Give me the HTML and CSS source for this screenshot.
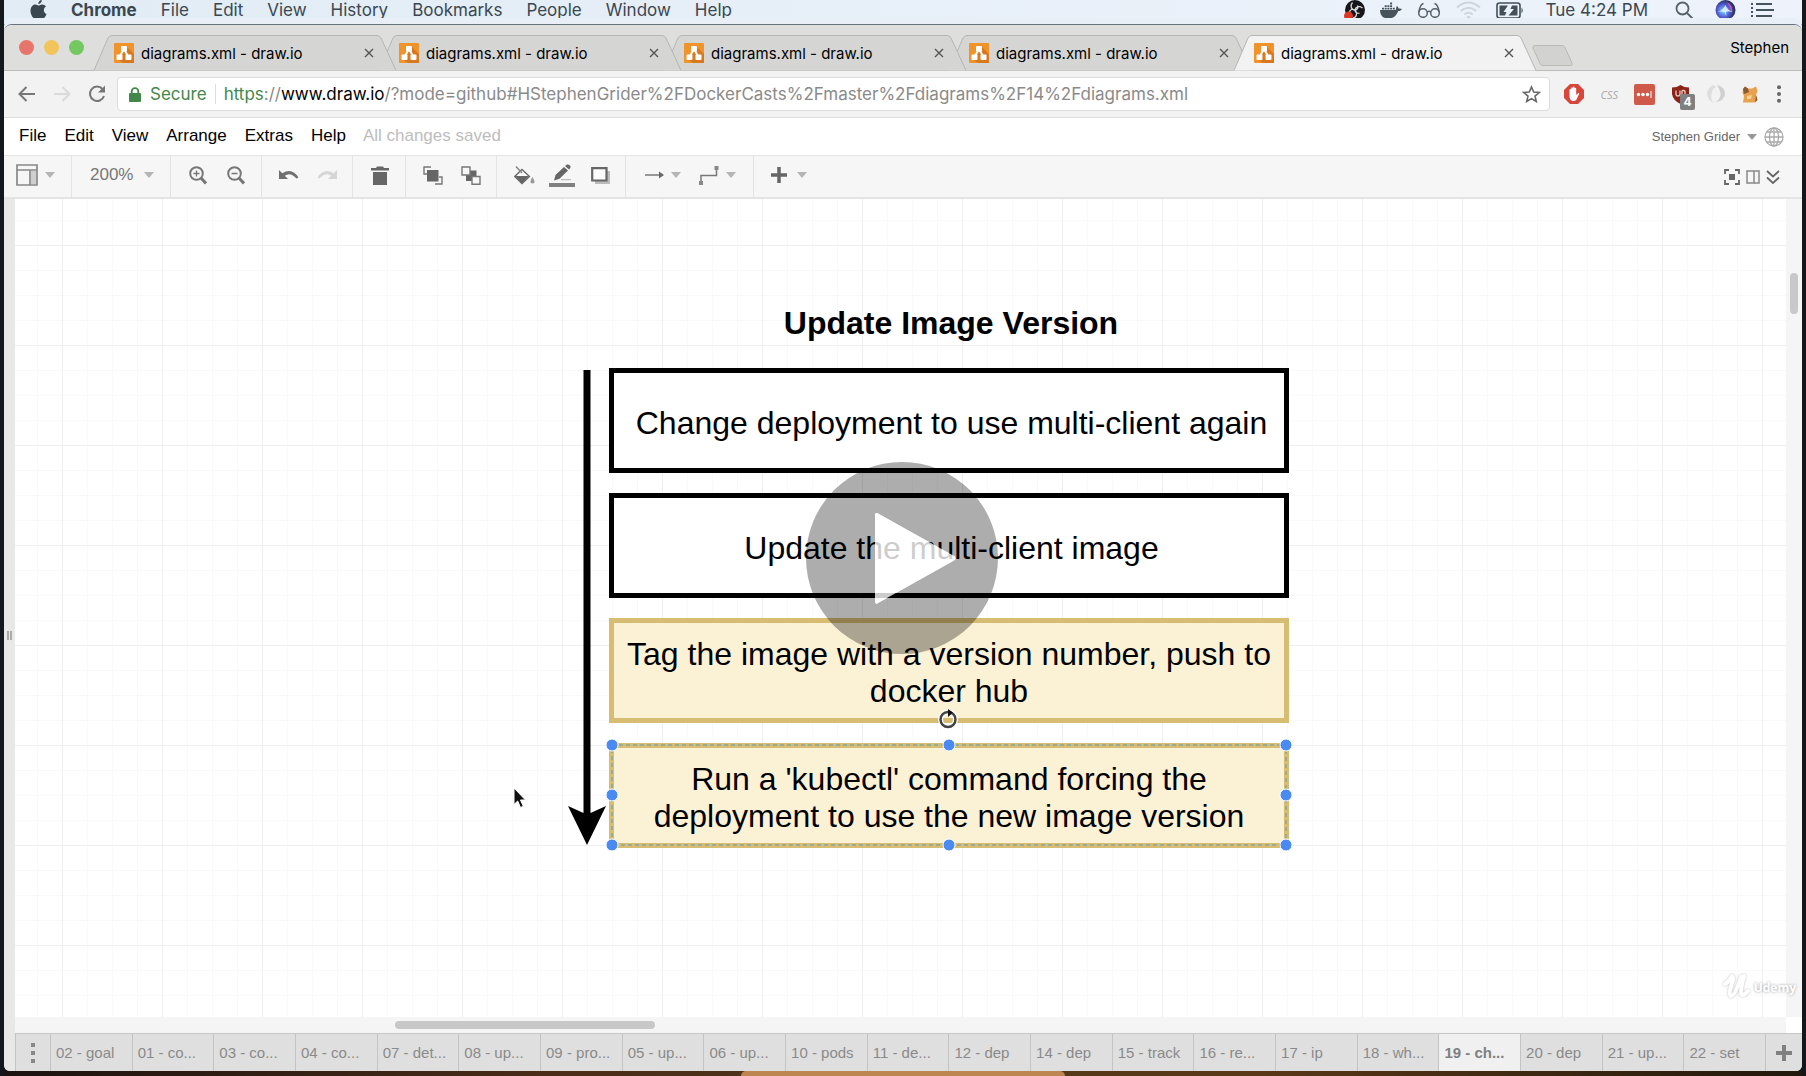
FILE: index.html
```html
<!DOCTYPE html>
<html lang="en">
<head>
<meta charset="utf-8">
<title>diagrams.xml - draw.io</title>
<link rel="stylesheet" href="styles.css">
</head>
<body>
<svg class="defs" aria-hidden="true">
  <symbol id="tab-shape" viewBox="0 0 302 36" preserveAspectRatio="none"><path d="M0 35.500 L14 3 Q15.500 0.500 18 0.500 H283 Q285.500 0.500 287 3 L302 35.500" /></symbol>
  <symbol id="favicon" viewBox="0 0 20 20"><rect width="20" height="20" rx="1" fill="#f0932b"/><path d="M12 3 L20 11 V20 H9 L3 16z" fill="#d9791e"/><path d="M10 6 L5.500 14 M10 6 L14.500 14" stroke="#fff" stroke-width="2"/><rect x="7" y="3" width="6" height="5.500" rx="1" fill="#fff"/><rect x="2.500" y="11.500" width="6" height="5.500" rx="1" fill="#fff"/><rect x="11.500" y="11.500" width="6" height="5.500" rx="1" fill="#fff"/></symbol>
  <symbol id="close" viewBox="0 0 10 10"><path d="M1 1 L9 9 M9 1 L1 9" stroke="#555" stroke-width="1.400" fill="none"/></symbol>
  <symbol id="caret" viewBox="0 0 10 6"><path d="M0 0 H10 L5 6z"/></symbol>
</svg>

<nav class="macbar" aria-label="System menu">
  <button class="apple" aria-label="Apple"><svg width="17" height="20" viewBox="0 0 17 20"><path d="M8.500 5.500C9.500 5.500 10.500 4.400 12.300 4.400C13.800 4.400 15.200 5.200 16 6.500C12.800 8.500 13.300 12.700 16.500 14C15.500 16.800 13.900 19 12.200 19C10.900 19 10.400 18.200 8.900 18.200C7.300 18.200 6.700 19 5.500 19C3.200 19 0.500 14.800 0.500 10.800C0.500 6.800 2.900 4.500 5.200 4.500C6.700 4.500 7.700 5.500 8.500 5.500zM8.300 4C8.200 1.900 9.800 0.100 11.800 0C12 2.200 10.200 4 8.300 4z" fill="#3b4750"/></svg></button>
  <button class="strong">Chrome</button><button>File</button><button>Edit</button><button>View</button><button>History</button><button>Bookmarks</button><button>People</button><button>Window</button><button>Help</button>
  <div class="status">
    <svg width="21" height="21" viewBox="0 0 21 21"><circle cx="11" cy="10" r="10" fill="#15161a"/><path d="M8.500 2.500C5.500 6 7.500 10 11 10C13.500 10 14.500 7.500 13.500 5.500M18.500 8C15 5.500 11.500 7 11 10C11 12.500 13.500 14 15.500 13M9 18C13 17.500 13.500 13 11 10C8.500 8.500 6 9.500 5.500 12" fill="none" stroke="#d8d8da" stroke-width="1.300"/><circle cx="4.500" cy="16" r="4.500" fill="#dd3526"/></svg>
    <svg width="22" height="18" viewBox="0 0 22 18"><path d="M0 9H15.500C16.500 8 16 6.500 16.800 5C18 5.700 18.500 6.500 18.500 7.500C20 7.200 21 7.500 22 8C21 9.800 19.500 10 18.200 10C16.500 15 13 17.500 8.500 17.500C3.500 17.500 0 15 0 9z" fill="#47535c"/><path d="M2 6.700h2v1.800h-2zM4.700 6.700h2v1.800h-2zM7.400 6.700h2v1.800h-2zM10.100 6.700h2v1.800h-2zM12.800 6.700h2v1.800h-2zM4.700 4.200h2V6h-2zM7.400 4.200h2V6h-2zM10.100 4.200h2V6h-2zM10.100 1.500h2v1.900h-2z" fill="#47535c"/></svg>
    <svg width="24" height="16" viewBox="0 0 24 16"><g fill="none" stroke="#56616a" stroke-width="1.500"><circle cx="6" cy="11" r="4.300"/><circle cx="18" cy="11" r="4.300"/><path d="M10.300 10Q12 8.700 13.700 10M1.800 10C2.500 6 4 2 6.500 1.500M22.200 10C21.500 6 20 2 17.500 1.500"/></g></svg>
    <svg width="25" height="19" viewBox="0 0 25 19"><g fill="none" stroke="#cfd5da" stroke-width="2"><path d="M1 6.500Q12.500-3.500 24 6.500M4.700 10Q12.500 3.500 20.300 10M8.300 13.500Q12.500 10 16.700 13.500"/></g><circle cx="12.500" cy="16.500" r="1.800" fill="#cfd5da"/></svg>
    <svg width="28" height="17" viewBox="0 0 28 17"><rect x="1" y="1" width="23" height="15" rx="2.500" fill="none" stroke="#454f57" stroke-width="1.600"/><path d="M3.500 3.500H12L7.500 10H10.500L9 13.500H3.500zM16 3.500H21.500V13.500H12.500L18 7H14.500z" fill="#454f57"/><path d="M25.500 5.500Q28 8.500 25.500 11.500z" fill="#454f57"/></svg>
    <time>Tue 4:24 PM</time>
    <svg class="search" width="19" height="19" viewBox="0 0 19 19"><g fill="none" stroke="#56616a" stroke-width="1.800"><circle cx="7.500" cy="7.500" r="6"/><path d="M12 12L18 18"/></g></svg>
    <svg width="21" height="20" viewBox="0 0 21 20"><defs><radialGradient id="siri" cx=".4" cy=".55" r=".6"><stop offset="0" stop-color="#7fe0ff"/><stop offset=".5" stop-color="#5560d8"/><stop offset="1" stop-color="#23264f"/></radialGradient></defs><circle cx="10.500" cy="10" r="10" fill="url(#siri)"/><path d="M12 2Q19 6 16.500 13Q15 7 12 2z" fill="#c752b8"/><path d="M3 12Q8 10 10.500 5Q12 10 18 12Q13 11 11 12L11.500 17L9.500 12Q6 11 3 12z" fill="#e8fbff" opacity=".8"/></svg>
    <svg width="23" height="15" viewBox="0 0 23 15"><g fill="#47535c"><path d="M0 0h2v2H0zM0 4h2v2H0zM0 8h2v2H0zM0 12h2v2H0zM5 0h16v2H5zM5 6h18v2H5zM5 12h16v2H5z"/></g></svg>
  </div>
</nav>

<div class="window">
  <header class="tabstrip">
    <div class="lights"><button class="red" aria-label="Close"></button><button class="yellow" aria-label="Minimise"></button><button class="green" aria-label="Zoom"></button></div>
    <div class="tabs">
      <div class="tab"><svg class="shape"><use href="#tab-shape"/></svg><svg class="fav"><use href="#favicon"/></svg><a href="#">diagrams.xml - draw.io</a><button aria-label="Close tab"><svg><use href="#close"/></svg></button></div>
      <div class="tab"><svg class="shape"><use href="#tab-shape"/></svg><svg class="fav"><use href="#favicon"/></svg><a href="#">diagrams.xml - draw.io</a><button aria-label="Close tab"><svg><use href="#close"/></svg></button></div>
      <div class="tab"><svg class="shape"><use href="#tab-shape"/></svg><svg class="fav"><use href="#favicon"/></svg><a href="#">diagrams.xml - draw.io</a><button aria-label="Close tab"><svg><use href="#close"/></svg></button></div>
      <div class="tab"><svg class="shape"><use href="#tab-shape"/></svg><svg class="fav"><use href="#favicon"/></svg><a href="#">diagrams.xml - draw.io</a><button aria-label="Close tab"><svg><use href="#close"/></svg></button></div>
      <div class="tab active"><svg class="shape"><use href="#tab-shape"/></svg><svg class="fav"><use href="#favicon"/></svg><a href="#">diagrams.xml - draw.io</a><button aria-label="Close tab"><svg><use href="#close"/></svg></button></div>
      <button class="newtab" aria-label="New tab"><svg width="41" height="21" viewBox="0 0 41 21"><path d="M3 .5H30Q32 .5 33 2.500L40 18Q41 20.500 38.500 20.500H11Q9 20.500 8 18.500L1 3Q0 .5 3 .5z" fill="#d2d2d1" stroke="#b9b9b8"/></svg></button>
    </div>
    <button class="profile">Stephen</button>
  </header>

  <div class="navbar">
    <div class="navbuttons">
      <button aria-label="Back"><svg width="18" height="16" viewBox="0 0 18 16"><path d="M17 8H2M8.500 1L1.500 8L8.500 15" fill="none" stroke="#777" stroke-width="2"/></svg></button>
      <button aria-label="Forward"><svg width="18" height="16" viewBox="0 0 18 16"><path d="M1 8H16M9.500 1L16.500 8L9.500 15" fill="none" stroke="#dadada" stroke-width="2"/></svg></button>
      <button aria-label="Reload"><svg width="18" height="18" viewBox="0 0 18 18"><path d="M14.500 4A7.200 7.200 0 1 0 16 11" fill="none" stroke="#777" stroke-width="2"/><path d="M17 0.500V7.500H10z" fill="#777"/></svg></button>
    </div>
    <div class="omnibox">
      <svg width="12" height="15" viewBox="0 0 12 15"><rect x="0" y="6" width="12" height="9" rx="1" fill="#43884a"/><path d="M2.700 7V4.500a3.300 3.300 0 0 1 6.600 0V7" fill="none" stroke="#43884a" stroke-width="1.800"/></svg>
      <span class="secure">Secure</span>
      <div class="url" role="textbox" aria-label="Address" contenteditable="true" spellcheck="false"><span class="scheme">https</span>://<span class="host">www.draw.io</span>/?mode=github#HStephenGrider%2FDockerCasts%2Fmaster%2Fdiagrams%2F14%2Fdiagrams.xml</div>
      <button aria-label="Bookmark"><svg width="19" height="18" viewBox="0 0 19 18"><path d="M9.500 2L11.700 7L17.200 7.500L13 11.100L14.300 16.500L9.500 13.600L4.700 16.500L6 11.100L1.800 7.500L7.300 7z" fill="none" stroke="#666" stroke-width="1.600"/></svg></button>
    </div>
    <div class="extensions">
      <button aria-label="Ad blocker"><svg width="20" height="20" viewBox="0 0 20 20"><path d="M6 0H14L20 6V14L14 20H6L0 14V6z" fill="#d6463a"/><path d="M5.500 9.500V5.500Q6.300 4.500 7 5.500V9V4Q7.800 2.800 8.700 4V8.500V3.200Q9.600 2 10.500 3.200V8.500V4.300Q11.400 3.200 12.200 4.300V11L14 9.200Q15.200 8.700 15.200 9.800L12.500 15.500Q11 17.500 8.500 17Q5.500 16 5.500 12z" fill="#fff"/></svg></button>
      <button class="css" aria-label="CSS">CSS</button>
      <button aria-label="Passwords"><svg width="21" height="21" viewBox="0 0 21 21"><rect width="21" height="21" rx="2" fill="#d05a4a"/><circle cx="4.500" cy="10.500" r="1.700" fill="#fff"/><circle cx="9" cy="10.500" r="1.700" fill="#fff"/><circle cx="13.500" cy="10.500" r="1.700" fill="#fff"/><path d="M17 7V14" stroke="#fff" stroke-width="1"/></svg></button>
      <button class="ublock" aria-label="Blocker, 4"><svg width="19" height="19" viewBox="0 0 19 19"><path d="M9.500 0Q13 2.500 18 2.500V9Q17 15.500 9.500 19Q2 15.500 1 9V2.500Q6 2.500 9.500 0z" fill="#8c2318"/><path d="M5 5.500V9Q5 11 7 11Q9 11 9 9V5.500M11 5.500V11H13Q14.500 10.500 14 8.500Q14.500 6 13 5.500H11" fill="none" stroke="#e3bcb6" stroke-width="1.400"/></svg><span>4</span></button>
      <button aria-label="Extension"><svg width="20" height="20" viewBox="0 0 20 20"><path d="M7 1Q1 4 1 10.500Q2 17 8 19Q4 15 5.500 10Q6 5 10 3z" fill="#dedede"/><path d="M11 1Q19 3 19 10Q18 17 10 18Q15 14 14.500 9.500Q14 5 11 1z" fill="#d0d0d0"/></svg></button>
      <button aria-label="Extension"><svg width="16" height="17" viewBox="0 0 16 17"><path d="M1 3L3 0.500L6 2.500H10L14 0.500L15.500 5L14 9L15 12L13 16.500H1L2 10L0.500 7z" fill="#e8a14d"/><path d="M1 3L3 .5L6 2.500L7 6L2 8zM14 9L15.500 14L13 16.500z" fill="#8a5a34"/><path d="M5 10L10 9L9 13L5 13z" fill="#f6d09a"/></svg></button>
      <button class="more" aria-label="Menu"><svg width="4" height="18" viewBox="0 0 4 18"><g fill="#666"><circle cx="2" cy="2.200" r="2"/><circle cx="2" cy="9" r="2"/><circle cx="2" cy="15.800" r="2"/></g></svg></button>
    </div>
  </div>

  <div class="menubar">
    <button>File</button><button>Edit</button><button>View</button><button>Arrange</button><button>Extras</button><button>Help</button>
    <span class="saved">All changes saved</span>
    <button class="user">Stephen Grider <svg class="caret"><use href="#caret"/></svg></button>
    <button class="globe" aria-label="Language"><svg width="20" height="20" viewBox="0 0 20 20"><g fill="none" stroke="#ababab" stroke-width="1.300"><circle cx="10" cy="10" r="9"/><ellipse cx="10" cy="10" rx="4.500" ry="9"/><path d="M10 1V19M1 10H19M2.800 5H17.200M2.800 15H17.200"/></g></svg></button>
  </div>

  <div class="toolbar">
    <div class="group view"><button aria-label="View"><svg width="22" height="22" viewBox="0 0 22 22"><path d="M1 1H21V21H1zM1 6H21M14 6V21" fill="none" stroke="#888" stroke-width="1.700"/><path d="M15 7H20V20H15z" fill="#cfcfcf"/></svg><svg class="caret"><use href="#caret"/></svg></button></div>
    <div class="group percent"><button>200%<svg class="caret"><use href="#caret"/></svg></button></div>
    <div class="group">
      <button aria-label="Zoom in"><svg width="18" height="19" viewBox="0 0 18 19"><g fill="none" stroke="#777"><circle cx="7.500" cy="7.500" r="6.300" stroke-width="2"/><path d="M12 12L17 17.500" stroke-width="3"/><path d="M4.500 7.500H10.500M7.500 4.500V10.500" stroke-width="1.300"/></g></svg></button>
      <button aria-label="Zoom out"><svg width="18" height="19" viewBox="0 0 18 19"><g fill="none" stroke="#777"><circle cx="7.500" cy="7.500" r="6.300" stroke-width="2"/><path d="M12 12L17 17.500" stroke-width="3"/><path d="M4.500 7.500H10.500" stroke-width="1.300"/></g></svg></button>
    </div>
    <div class="group">
      <button aria-label="Undo"><svg width="20" height="12" viewBox="0 0 20 12"><path d="M0 1V10H9L5.800 6.800Q11 2.500 17.500 9.500L19.500 8.500Q13-2 3.300 4.300z" fill="#6f6f6f"/></svg></button>
      <button aria-label="Redo"><svg width="20" height="12" viewBox="0 0 20 12"><path d="M20 1V10H11L14.200 6.800Q9 2.500 2.500 9.500L.5 8.500Q7-2 16.700 4.300z" fill="#d6d6d6"/></svg></button>
    </div>
    <div class="group"><button aria-label="Delete"><svg width="18" height="19" viewBox="0 0 18 19"><path d="M0 2H5L6 0.500H12L13 2H18V4.500H0zM2 6H16V19H2z" fill="#666"/></svg></button></div>
    <div class="group">
      <button aria-label="To front"><svg width="20" height="19" viewBox="0 0 20 19"><path d="M8 1H1V8H4M12 18H19V11H16" fill="none" stroke="#777" stroke-width="1.400"/><path d="M4 4H15.500V15.500H4z" fill="#666"/></svg></button>
      <button aria-label="To back"><svg width="20" height="19" viewBox="0 0 20 19"><path d="M5 4.500H15.500V15H5z" fill="#666"/><g fill="#f7f7f7" stroke="#777" stroke-width="1.400"><path d="M1 1H9V9H1zM11 10.500H19V18.300H11z"/></g></svg></button>
    </div>
    <div class="group">
      <button aria-label="Fill"><svg width="21" height="19" viewBox="0 0 21 19"><path d="M8 3.500L15.500 10.500L8 17.500L0.800 10.500z" fill="#fafafa" stroke="#666" stroke-width="1.300"/><path d="M1 10H15L8 17.500z" fill="#666"/><path d="M2 .5L8 7" stroke="#888" stroke-width="1.500"/><path d="M18.300 11Q21 15 20.500 16.500Q18.500 18.500 16.500 16.500Q16 15 18.300 11z" fill="#999"/></svg></button>
      <button aria-label="Line colour"><svg width="26" height="23" viewBox="0 0 26 23"><path d="M0 19H26V23H0z" fill="#808080"/><path d="M5 16.500L6.500 11L15 3L19 6.500L10.500 14.800zM16 2L18 .5Q20 0 21.500 2Q22 3.500 20 5.500z" fill="#666"/><path d="M12 15.700H22" stroke="#bbb" stroke-width="1.200"/></svg></button>
      <button aria-label="Shadow"><svg width="19" height="17" viewBox="0 0 19 17"><path d="M4 4H19V17H4z" fill="#bbb"/><path d="M1.200 1.200H15.500V13.500H1.200z" fill="#fbfbfb" stroke="#666" stroke-width="2.200"/></svg></button>
    </div>
    <div class="group lines">
      <button aria-label="Arrow style"><svg width="19" height="8" viewBox="0 0 19 8"><path d="M0 4H15" stroke="#777" stroke-width="1.500"/><path d="M14 .5L19 4L14 7.500z" fill="#666"/></svg><svg class="caret"><use href="#caret"/></svg></button>
      <button aria-label="Connector style"><svg width="20" height="19" viewBox="0 0 20 19"><path d="M2 16V9.500H17.500V3" fill="none" stroke="#777" stroke-width="1.500"/><path d="M0 15H4V19H0zM15.500 0H19.500V4H15.500z" fill="#888"/></svg><svg class="caret"><use href="#caret"/></svg></button>
    </div>
    <div class="group insert"><button aria-label="Insert"><svg width="16" height="16" viewBox="0 0 16 16"><path d="M8 0V16M0 8H16" stroke="#666" stroke-width="3.500"/></svg><svg class="caret"><use href="#caret"/></svg></button></div>
    <div class="tools-right">
      <button aria-label="Fullscreen"><svg width="16" height="16" viewBox="0 0 16 16"><path d="M1 5V1H5M11 1H15V5M15 11V15H11M5 15H1V11" fill="none" stroke="#666" stroke-width="1.800"/><path d="M5 5H11V11H5z" fill="#666"/></svg></button>
      <button aria-label="Format panel"><svg width="14" height="14" viewBox="0 0 14 14"><path d="M1 1H13V13H1zM8 1V13" fill="none" stroke="#888" stroke-width="1.500"/></svg></button>
      <button aria-label="Collapse"><svg width="14" height="14" viewBox="0 0 14 14"><path d="M1 1L7 6.500L13 1M1 7.500L7 13L13 7.500" fill="none" stroke="#666" stroke-width="1.800"/></svg></button>
    </div>
  </div>

  <div class="workspace">
    <div class="splitter"><i></i></div>
    <div class="editor">
      <main class="canvas">
        <div class="diagram">
          <h1>Update Image Version</h1>
          <div class="step single">Change deployment to use multi-client again</div>
          <div class="step single">Update the multi-client image</div>
          <div class="step gold">Tag the image with a version number, push to docker hub</div>
          <div class="step gold">Run a 'kubectl' command forcing the deployment to use the new image version</div>
        </div>
        <svg class="flow" width="40" height="478" viewBox="0 0 40 478"><path d="M16.500 0H23.500V443L39 436L20 475L1 436L16.500 443z"/></svg>
        <svg class="selection" width="690" height="144" viewBox="0 0 690 144">
          <path d="M8 36H682V136H8z" fill="none" stroke="#86a8a0" stroke-width="1.500" stroke-dasharray="4 3"/>
          <g fill="#4a8af4" stroke="#fff" stroke-width="1"><circle cx="8" cy="36" r="6"/><circle cx="345" cy="36" r="6"/><circle cx="682" cy="36" r="6"/><circle cx="8" cy="86" r="6"/><circle cx="682" cy="86" r="6"/><circle cx="8" cy="136" r="6"/><circle cx="345" cy="136" r="6"/><circle cx="682" cy="136" r="6"/></g>
          <circle cx="344" cy="10.500" r="7.500" fill="none" stroke="#fff" stroke-width="5"/>
          <circle cx="344" cy="10.500" r="7.500" fill="none" stroke="#444" stroke-width="2.500"/><path d="M344 0L349 3.500L344 8z" fill="#111"/>
        </svg>
        <svg class="cursor" width="14" height="22" viewBox="0 0 14 22"><path d="M1 1V17.500L4.700 14L7.500 20.500L10.300 19.300L7.500 13H12.500z" fill="#111" stroke="#fff" stroke-width="1"/></svg>
        <button class="play" aria-label="Play"><svg width="192" height="192" viewBox="0 0 192 192"><path d="M96 0A96 96 0 1 0 96 192A96 96 0 1 0 96 0zM69 53Q69 50 72 51.500L148 94Q151 96 148 98.500L72 141Q69 143 69 139z" fill="#000" fill-rule="evenodd" opacity=".32"/><path d="M69 53Q69 50 72 51.500L148 94Q151 96 148 98.500L72 141Q69 143 69 139z" fill="#fff" opacity=".8"/></svg></button>
      </main>
      <div class="vscroll"><i></i></div>
      <div class="hscroll"><i></i></div>
      <div class="corner"></div>
      <div class="watermark"><svg width="28" height="26" viewBox="0 0 28 26"><path d="M2 10Q6 8 9 2Q11 3 9 9Q5 20 8 22Q12 22 18 3L21 2Q16 20 19 21Q22 21 25 17" fill="none" stroke="#fff" stroke-width="4" stroke-linecap="round" stroke-linejoin="round"/></svg><span>Udemy</span></div>
      <nav class="pages" aria-label="Pages">
        <button class="pagemenu" aria-label="Pages"><svg width="4" height="20" viewBox="0 0 4 20"><path d="M0 0h4v4H0zM0 8h4v4H0zM0 16h4v4H0z" fill="#888"/></svg></button>
        <a href="#">02 - goal</a><a href="#">01 - co...</a><a href="#">03 - co...</a><a href="#">04 - co...</a><a href="#">07 - det...</a><a href="#">08 - up...</a><a href="#">09 - pro...</a><a href="#">05 - up...</a><a href="#">06 - up...</a><a href="#">10 - pods</a><a href="#">11 - de...</a><a href="#">12 - dep</a><a href="#">14 - dep</a><a href="#">15 - track</a><a href="#">16 - re...</a><a href="#">17 - ip</a><a href="#">18 - wh...</a><a href="#" class="current">19 - ch...</a><a href="#">20 - dep</a><a href="#">21 - up...</a><a href="#">22 - set</a>
        <button class="addpage" aria-label="Add page"><svg width="16" height="16" viewBox="0 0 16 16"><path d="M8 0V16M0 8H16" stroke="#808080" stroke-width="4"/></svg></button>
      </nav>
    </div>
  </div>
</div>
<div class="desktop"><i></i></div>
</body>
</html>
```
FILE: styles.css
```css
* { box-sizing: border-box; }
body {
  margin: 0;
  padding: 0 4px;
  min-height: 100vh;
  display: flex;
  flex-direction: column;
  background: #14181d;
  font-family: "Liberation Sans", Arial, sans-serif;
  color: #000;
  overflow: hidden;
}
button {
  border: 0;
  padding: 0;
  margin: 0;
  background: none;
  font: inherit;
  color: inherit;
  display: flex;
  align-items: center;
  justify-content: center;
  flex: none;
  white-space: nowrap;
}
a { color: inherit; text-decoration: none; }
svg { display: block; flex: none; }
.defs { position: absolute; width: 0; height: 0; }
.caret { width: 10px; height: 6px; fill: #b5b5b5; }

/* system menu bar */
.macbar {
  height: 24px;
  padding: 0 28px 4px 26px;
  display: flex;
  align-items: center;
  gap: 24px;
  background: linear-gradient(90deg, #e1ecf5, #eef3fb);
  font: 17px Inter, sans-serif;
  color: #3b4750;
}
.macbar .strong { font-weight: 700; }
.status { margin-left: auto; display: flex; align-items: center; gap: 15px; }
.status time { margin: 0 12px 0 7px; }
.status .search { margin-right: 6px; }

/* browser chrome */
.window {
  flex: 1;
  display: flex;
  flex-direction: column;
  border-top: 1px solid #68727c;
  border-radius: 8px 8px 6px 6px;
  background: #f2f2f2;
  overflow: hidden;
  box-shadow: 0 -6px 0 #e8eff6;
}
.tabstrip {
  height: 46px;
  display: flex;
  align-items: flex-end;
  background: #dededd;
  border-bottom: 1px solid #bcbcbc;
  font: 15px Inter, sans-serif;
}
.lights { display: flex; gap: 10px; padding: 0 10px 15px 15px; flex: none; }
.lights button { width: 15px; height: 15px; border-radius: 50%; }
.red { background: #e8756b; }
.yellow { background: #f2c45c; }
.green { background: #74c862; }
.tabs { display: flex; flex: 1; min-width: 0; align-items: flex-end; margin-bottom: -1px; }
.tab {
  position: relative;
  isolation: isolate;
  flex: 0 1 302px;
  min-width: 0;
  height: 36px;
  margin-right: -17px;
  padding: 0 22px 0 20px;
  display: flex;
  align-items: center;
  gap: 7px;
}
.tab:nth-child(1) { z-index: 4; }
.tab:nth-child(2) { z-index: 3; }
.tab:nth-child(3) { z-index: 2; }
.tab:nth-child(4) { z-index: 1; }
.tab.active { z-index: 5; }
.shape { position: absolute; inset: 0; width: 100%; height: 100%; z-index: -1; fill: #d5d5d4; stroke: #b5b5b5; }
.active .shape { fill: #f2f2f2; }
.fav { width: 20px; height: 20px; }
.tab a { flex: 1; overflow: hidden; white-space: nowrap; }
.tab button svg { width: 10px; height: 10px; }
.newtab { margin: 0 0 5px 13px; }
.profile { padding: 0 13px 13px 0; }

.navbar {
  height: 47px;
  padding: 0 21px 0 14px;
  display: flex;
  align-items: center;
  gap: 14px;
  border-bottom: 1px solid #ddd;
}
.navbuttons { display: flex; align-items: center; gap: 17px; margin-right: -3px; }
.omnibox {
  flex: 1;
  min-width: 0;
  height: 34px;
  padding: 0 8px 0 11px;
  display: flex;
  align-items: center;
  border: 1px solid #dcdcdc;
  border-radius: 4px;
  background: #fff;
  font: 17px Inter, sans-serif;
  color: #8a8a8a;
}
.secure { color: #43884a; padding: 0 8px 0 9px; margin-right: 8px; border-right: 1px solid #ddd; }
.url { flex: 1; min-width: 0; overflow: hidden; white-space: nowrap; outline: 0; }
.scheme { color: #43884a; }
.host { color: #000; }
.extensions { display: flex; align-items: center; gap: 16px; }
.css { font: italic 11px "Open Sans", sans-serif; color: #a8a8a8; }
.ublock { position: relative; }
.ublock span {
  position: absolute;
  left: 9px;
  top: 9px;
  width: 15px;
  height: 16px;
  border-radius: 2px;
  background: #808080;
  color: #fff;
  font: bold 12px/16px Inter, sans-serif;
}
.more { margin-left: 3px; }

/* editor menu */
.menubar {
  height: 38px;
  padding: 0 18px 2px 15px;
  display: flex;
  align-items: center;
  gap: 18px;
  background: #fff;
  border-bottom: 1px solid #e4e4e4;
  font-size: 17px;
}
.saved { color: #bdbdbd; margin-left: -1px; }
.user { margin-left: auto; padding-top: 2px; gap: 7px; font-size: 13px; color: #666; }
.user .caret { fill: #999; }
.globe { margin-left: -11px; padding-top: 2px; }

.toolbar {
  height: 43px;
  display: flex;
  background: #f6f6f6;
  border-bottom: 2px solid #e4e4e4;
  font-size: 17px;
  color: #777;
}
.group { display: flex; padding: 0 6px 3px 8px; border-right: 1px solid #e4e4e4; }
.group button { width: 38px; }
.view button { width: auto; gap: 7px; }
.view { padding-left: 12px; padding-right: 16px; }
.percent button { width: auto; gap: 11px; }
.percent { padding-left: 18px; padding-right: 16px; }
.lines { gap: 18px; padding-left: 19px; padding-right: 17px; }
.lines button { width: auto; gap: 7px; }
.insert { border: 0; padding-left: 17px; }
.insert button { width: auto; gap: 10px; }
.tools-right { margin-left: auto; padding-right: 22px; display: flex; gap: 6px; }

/* drawing area */
.workspace { flex: 1; display: flex; min-height: 0; }
.splitter { width: 11px; background: #e8e8e8; display: flex; align-items: center; justify-content: center; }
.splitter i { width: 5px; height: 9px; border: solid #aaa; border-width: 0 2px; }
.editor {
  position: relative;
  flex: 1;
  min-width: 0;
  display: grid;
  grid-template: minmax(0, 1fr) 16px 38px / minmax(0, 1fr) 16px;
}
.canvas {
  position: relative;
  overflow: hidden;
  background-color: #fff;
  background-image:
    linear-gradient(90deg, #efefef 1px, transparent 1px),
    linear-gradient(#efefef 1px, transparent 1px),
    linear-gradient(90deg, #f9f9f9 1px, transparent 1px),
    linear-gradient(#f9f9f9 1px, transparent 1px);
  background-size: 100px 100px, 100px 100px, 25px 25px, 25px 25px;
  background-position: 47px 46px;
}
.diagram {
  position: absolute;
  left: 594px;
  top: 106px;
  width: 680px;
  display: flex;
  flex-direction: column;
  gap: 20px;
  font-size: 32px;
  line-height: 37px;
  text-align: center;
}
.diagram h1 { margin: 0 0 6px; padding-left: 4px; font-size: 32px; line-height: 37px; }
.step {
  height: 105px;
  padding-top: 5px;
  border: 5px solid #000;
  background: #fff;
  display: flex;
  align-items: center;
  justify-content: center;
}
.single { padding-left: 5px; }
.gold { border-color: #d6bd72; background: #fbf2d6; }
.flow { position: absolute; left: 552px; top: 171px; }
.selection { position: absolute; left: 589px; top: 510px; }
.cursor { position: absolute; left: 498px; top: 588px; }
.play { position: absolute; left: 50%; top: 263px; margin-left: -95px; }
.vscroll, .hscroll { background: #f5f5f5; }
.vscroll { padding: 74px 0 0 4px; }
.vscroll i { display: block; width: 8px; height: 41px; border-radius: 4px; background: #c8c8c8; }
.hscroll { padding: 4px 0 0 380px; }
.hscroll i { display: block; width: 260px; height: 8px; border-radius: 4px; background: #c8c8c8; }
.corner { background: #fff; }
.watermark {
  position: absolute;
  right: 6px;
  bottom: 71px;
  display: flex;
  align-items: center;
  gap: 3px;
  font: bold 12px "Open Sans", sans-serif;
  color: #fff;
  text-shadow: 0 0 3px #999;
}
.watermark svg { filter: drop-shadow(0 0 1px #bbb); }
.pages {
  grid-column: 1 / -1;
  display: flex;
  background: #dfdfdf;
  border-top: 1px solid #c6c6c6;
  font-size: 15px;
  color: #8a8a8a;
}
.pages > * { border-left: 1px solid #c4c4c4; }
.pages a { flex: 1; min-width: 0; padding-left: 5px; line-height: 38px; white-space: nowrap; overflow: hidden; }
.pages .current { background: #f0f0f0; font-weight: bold; color: #808080; }
.pages .pagemenu { width: 35px; }
.pages .addpage { width: 37px; }

/* strip of desktop below the window */
.desktop {
  height: 5px;
  background: linear-gradient(90deg, #1c1210, #4a2c18 30%, #54391a 55%, #5a3818 70%, #22180c);
  display: flex;
  justify-content: center;
}
.desktop i { width: 324px; border-radius: 6px 6px 0 0; background: #bd8550; }
```
